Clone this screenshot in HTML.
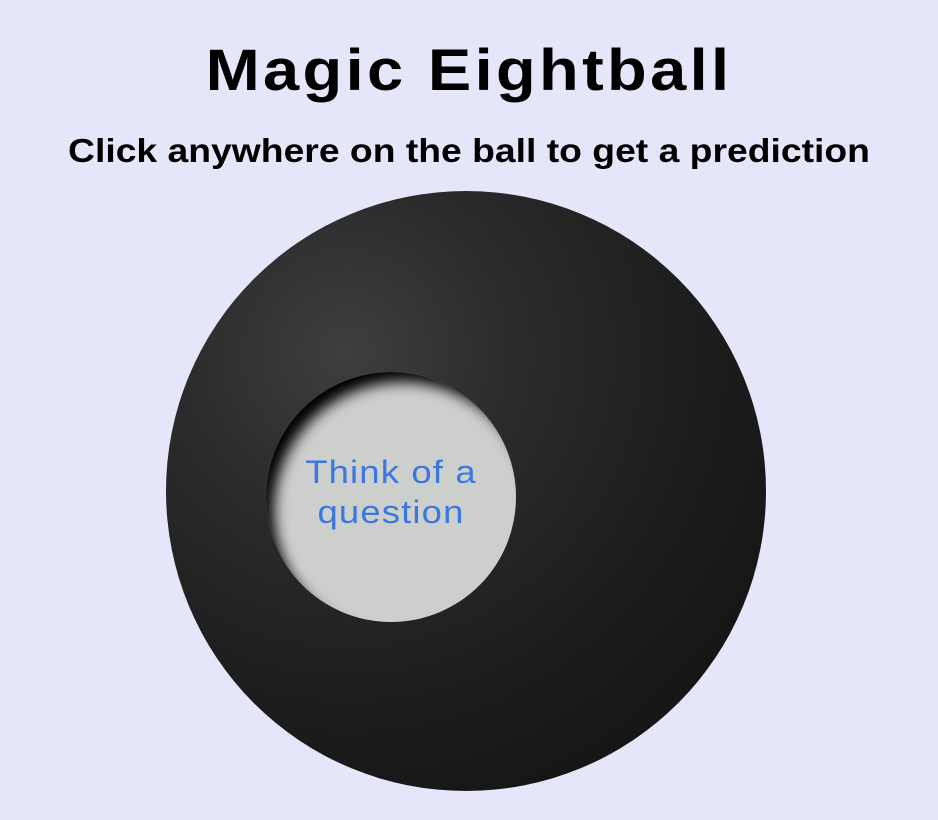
<!DOCTYPE html>
<html><head><style>
html,body{margin:0;padding:0;background:#e6e6fa;width:938px;height:820px;overflow:hidden;font-family:"Liberation Sans",sans-serif;}
h1{position:absolute;left:0;width:938px;top:36px;margin:0;text-align:center;font-size:58px;font-weight:bold;letter-spacing:3px;line-height:70px;transform:scaleX(1.12);}
h2{position:absolute;left:0;width:938px;top:131px;margin:0;text-align:center;font-size:33px;font-weight:bold;line-height:40px;transform:scaleX(1.13);}
.ball{position:absolute;left:166px;top:191px;width:600px;height:600px;border-radius:50%;background:radial-gradient(circle at 30% 27%,#3e3e3e 0%,#2a2a2a 30%,#1c1c1c 60%,#0f0f0f 100%);}
.win{position:absolute;left:266px;top:372px;width:250px;height:250px;border-radius:50%;background:#cdcfcd;box-shadow:inset 12px 14px 14px -4px #000;}
.txt{position:absolute;left:0;width:250px;top:80px;text-align:center;color:#3a78e0;font-size:32px;line-height:40px;letter-spacing:1px;transform:scaleX(1.14);}
</style></head><body>
<h1>Magic Eightball</h1>
<h2>Click anywhere on the ball to get a prediction</h2>
<div class="ball"></div>
<div class="win"><div class="txt">Think of a<br>question</div></div>
</body></html>
